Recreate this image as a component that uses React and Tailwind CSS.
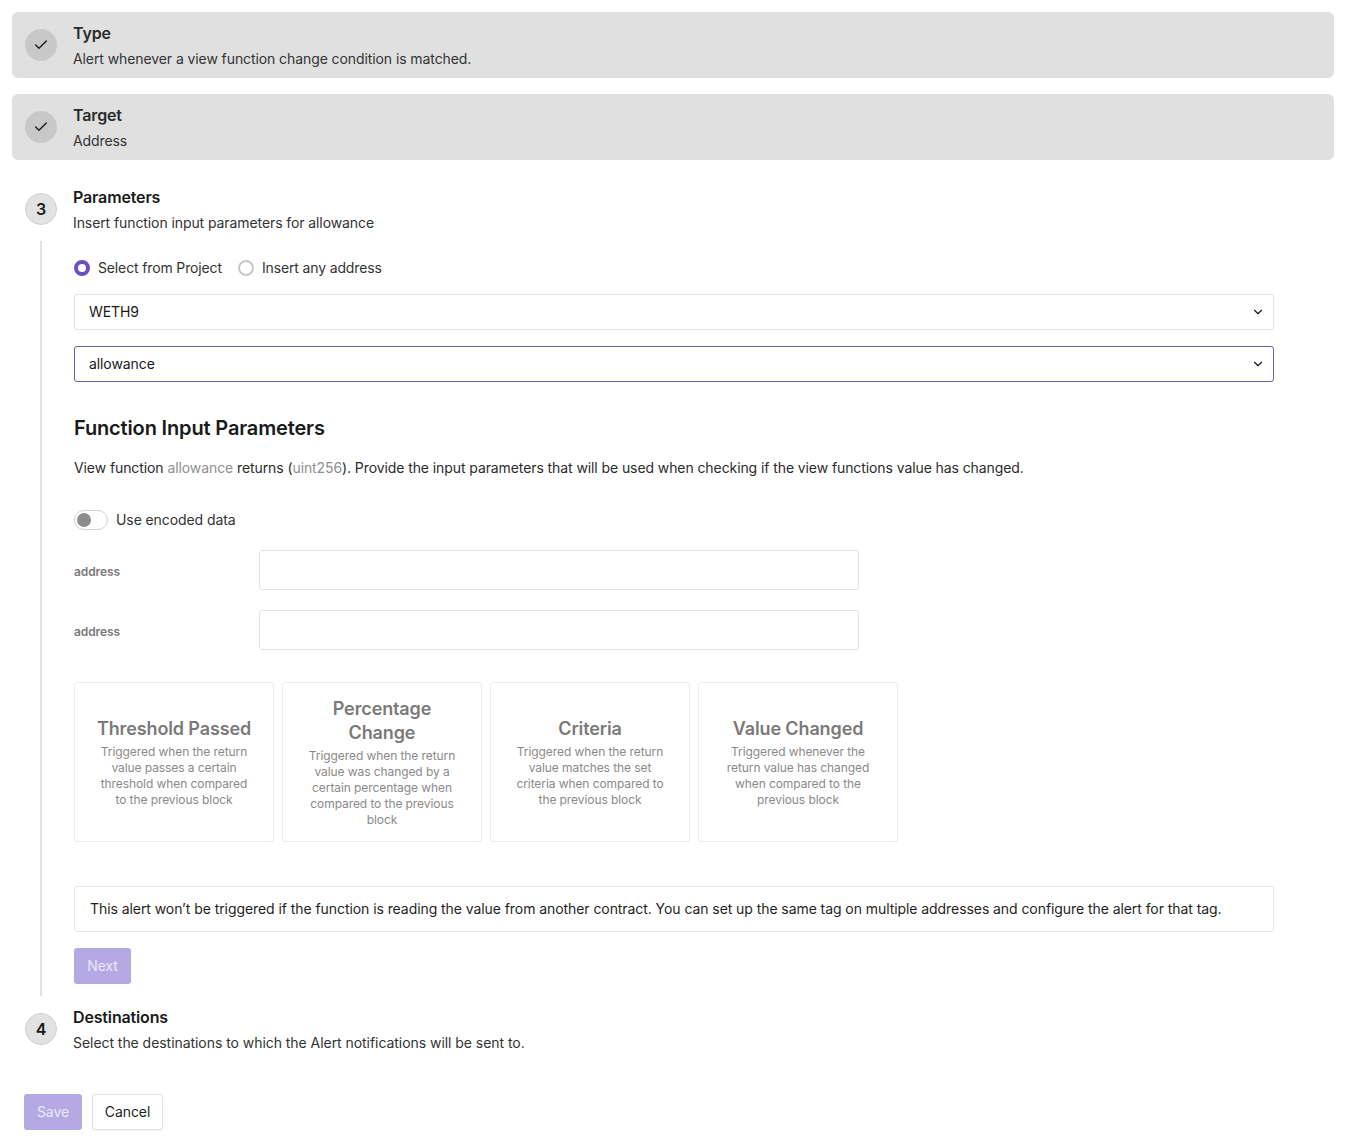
import { Check, ChevronDown } from "lucide-react";

const font = { fontFamily: "Inter, sans-serif" };

function DoneStep({ title, text }) {
  return (
    <div className="flex h-[66px] items-center rounded-md bg-[#e0e0e0] px-[13px]">
      <div className="flex h-8 w-8 shrink-0 items-center justify-center rounded-full bg-[#c8c8c8]">
        <Check size={16} strokeWidth={2} className="text-[#1a1a1a]" />
      </div>
      <div className="mt-[2px] ml-4">
        <div className="text-base leading-6 font-semibold tracking-[-0.15px] text-[#2b2b2b]">{title}</div>
        <div className="mt-[2px] text-sm leading-6 text-[#333333]">{text}</div>
      </div>
    </div>
  );
}

function StepHead({ num, title, text, textClass }) {
  return (
    <div className="flex items-center pl-[13px]">
      <div className="mb-[2px] flex h-8 w-8 shrink-0 items-center justify-center rounded-full border border-[#d0d0d0] bg-[#e2e2e2] text-base font-semibold text-[#1a1a1a]">
        {num}
      </div>
      <div className="ml-4">
        <div className="text-base leading-6 font-semibold tracking-[-0.15px] text-[#1a1a1a]">{title}</div>
        <div className={"mt-[2px] text-sm leading-6 text-[#333333] " + textClass}>{text}</div>
      </div>
    </div>
  );
}

function SelectBox({ value, focused }) {
  return (
    <div
      className={
        focused
          ? "flex h-9 items-center justify-between rounded-[3px] border border-[#6b5b9e] pr-[8px] pl-[14px] text-sm text-[#1a1a1a]"
          : "flex h-9 items-center justify-between rounded-[3px] border border-[#e2e2e2] pr-[8px] pl-[14px] text-sm text-[#1a1a1a]"
      }
    >
      {value}
      <ChevronDown size={14} strokeWidth={2} className="text-[#1a1a1a]" />
    </div>
  );
}

function ParamRow({ className }) {
  return (
    <div className={"flex items-center " + className}>
      <label className="mt-[4px] w-[185px] text-xs font-semibold text-[#7a7a7a]">address</label>
      <input className="h-10 w-[600px] rounded-[3px] border border-[#e2e2e2] bg-white" />
    </div>
  );
}

function TypeCard({ title, text }) {
  return (
    <div className="flex h-40 w-[200px] flex-col items-center justify-center rounded-[3px] border border-[#ececec] px-6 text-center">
      <div className="-mx-1 text-lg leading-6 font-semibold tracking-[-0.12px] text-[#7a7a7a]">{title}</div>
      <div className="mt-[3px] text-xs leading-4 tracking-[-0.08px] text-[#8a8a8a]">{text}</div>
    </div>
  );
}

export default function App() {
  return (
    <div style={font} className="min-h-[1142px] bg-white px-3 pt-3 tracking-[-0.09px]">
      <div className="flex flex-col gap-4">
        <DoneStep title="Type" text="Alert whenever a view function change condition is matched." />
        <DoneStep title="Target" text="Address" />
      </div>

      <div className="mt-[25px]">
        <StepHead num="3" title="Parameters" text="Insert function input parameters for allowance" />
      </div>

      <div className="mt-[6px] ml-[28px] w-[1234px] border-l-2 border-[#e2e2e2] pb-3 pl-[32px]">
        <div className="flex h-[53px] items-center pt-[1px] text-sm tracking-[-0.14px] text-[#333333]">
          <span className="h-4 w-4 rounded-full border-[4px] border-[#6b50c4] bg-white" />
          <span className="ml-2">Select from Project</span>
          <span className="ml-4 h-4 w-4 rounded-full border-2 border-[#c8c8c8] bg-white" />
          <span className="ml-2">Insert any address</span>
        </div>

        <div className="flex w-[1200px] flex-col gap-4">
          <SelectBox value="WETH9" />
          <SelectBox value="allowance" focused />
        </div>

        <h2 className="mt-[32px] text-xl leading-7 font-semibold tracking-[-0.15px] text-[#1a1a1a]">
          Function Input Parameters
        </h2>
        <p className="mt-[14px] text-sm leading-6 text-[#2b2b2b]">
          View function <span className="text-[#8f8f8f]">allowance</span> returns (
          <span className="text-[#8f8f8f]">uint256</span>). Provide the input parameters that will be used when
          checking if the view functions value has changed.
        </p>

        <div className="mt-[30px] flex items-center text-sm text-[#333333]">
          <div className="flex h-5 w-[34px] items-center rounded-full border border-[#d4d4d4] pl-[2px]">
            <span className="h-[14px] w-[14px] rounded-full bg-[#8c8c8c]" />
          </div>
          <span className="ml-2">Use encoded data</span>
        </div>

        <ParamRow className="mt-[20px]" />
        <ParamRow className="mt-[20px]" />

        <div className="mt-8 flex gap-2">
          <TypeCard
            title="Threshold Passed"
            text="Triggered when the return value passes a certain threshold when compared to the previous block"
          />
          <TypeCard
            title="Percentage Change"
            text="Triggered when the return value was changed by a certain percentage when compared to the previous block"
          />
          <TypeCard
            title="Criteria"
            text="Triggered when the return value matches the set criteria when compared to the previous block"
          />
          <TypeCard
            title="Value Changed"
            text="Triggered whenever the return value has changed when compared to the previous block"
          />
        </div>

        <div className="mt-[44px] flex h-[46px] w-[1200px] items-center rounded-[3px] border border-[#e6e6e6] pr-4 pl-[15px] text-sm tracking-[-0.07px] text-[#1f1f1f]">
          This alert won’t be triggered if the function is reading the value from another contract. You can set up
          the same tag on multiple addresses and configure the alert for that tag.
        </div>

        <button className="mt-4 flex h-9 w-[57px] items-center justify-center rounded-[3px] bg-[#b5a9e4] text-sm text-[#ece9f8]">
          Next
        </button>
      </div>

      <div className="mt-[9px]">
        <StepHead
          num="4"
          title="Destinations"
          text="Select the destinations to which the Alert notifications will be sent to."
          textClass="tracking-[-0.05px]"
        />
      </div>

      <div className="mt-[39px] ml-3 flex gap-[10px]">
        <button className="flex h-9 w-[58px] items-center justify-center rounded-[3px] bg-[#b5a9e4] text-sm text-[#ece9f8]">
          Save
        </button>
        <button className="flex h-9 w-[71px] items-center justify-center rounded-[3px] border border-[#e2e2e2] bg-white text-sm text-[#1f1f1f] shadow-xs">
          Cancel
        </button>
      </div>
    </div>
  );
}
